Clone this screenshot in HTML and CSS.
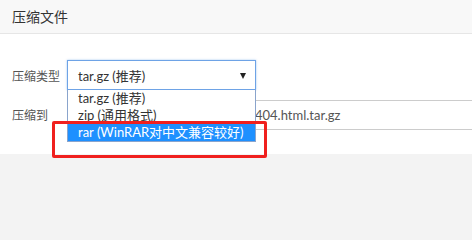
FILE: index.html
```html
<!DOCTYPE html>
<html>
<head>
<meta charset="utf-8">
<link rel="stylesheet" href="styles.css">
</head>
<body>
<div class="page">
  <div class="header">压缩文件</div>
  <div class="content">
    <div class="row">
      <label class="label">压缩类型</label>
      <div class="select">
        <span class="select-text">tar.gz (推荐)</span>
        <span class="arrow"></span>
      </div>
    </div>
    <div class="row row-second">
      <label class="label">压缩到</label>
      <div class="input"><span>404.html.tar.gz</span></div>
    </div>
    <ul class="dropdown">
      <li class="option">tar.gz (推荐)</li>
      <li class="option">zip (通用格式)</li>
      <li class="option selected">rar (WinRAR对中文兼容较好)</li>
    </ul>
    <div class="highlight-box"></div>
  </div>
  <div class="footer"></div>
</div>
</body>
</html>
```

FILE: styles.css
```css
html, body {
  margin: 0;
  padding: 0;
}
body {
  font-family: "Noto Sans CJK SC", "Noto Sans", sans-serif;
  background: #f3f3f3;
  overflow: hidden;
}
.page {
  width: 472px;
  height: 203px;
  display: flex;
  flex-direction: column;
  overflow: hidden;
}
.header {
  height: 33px;
  line-height: 32px;
  padding-left: 12px;
  font-size: 14px;
  color: #333;
  background: #f8f8f8;
  border-bottom: 1px solid #e6e6e6;
  flex: none;
}
.content {
  position: relative;
  background: #fff;
  padding: 26px 0 25px 0;
  display: flex;
  flex-direction: column;
  gap: 10px;
  flex: none;
}
.row {
  display: flex;
  align-items: center;
  height: 30px;
}
.label {
  width: 55px;
  padding-left: 12px;
  font-size: 12px;
  color: #555;
  flex: none;
}
.select {
  box-sizing: border-box;
  width: 189px;
  height: 30px;
  border: 1px solid #6ea3e6;
  box-shadow: 0 0 2px rgba(102, 160, 230, 0.6);
  display: flex;
  align-items: center;
  padding-left: 10px;
  padding-right: 6px;
  font-family: "Lato", "Noto Sans CJK SC", sans-serif;
  font-size: 13px;
  color: #333;
}
.select-text {
  flex: 1;
}
.arrow {
  width: 0;
  height: 0;
  border-left: 3.5px solid transparent;
  border-right: 3.5px solid transparent;
  border-top: 6px solid #222;
  margin-right: 3px;
  margin-top: 1px;
}
.row-second {
  height: 29px;
}
.input {
  box-sizing: border-box;
  width: 405px;
  height: 30px;
  border: 1px solid #ccc;
  border-right: none;
  display: flex;
  align-items: center;
  padding-left: 187px;
  font-family: "Lato", "Noto Sans CJK SC", sans-serif;
  font-size: 13px;
  color: #555;
  flex: none;
  white-space: nowrap;
}
.dropdown {
  position: absolute;
  left: 67px;
  top: 56px;
  width: 189px;
  box-sizing: border-box;
  margin: 0;
  padding: 0;
  list-style: none;
  background: #fff;
  border: 1px solid #8aa4cc;
  border-top: none;
  font-family: "Lato", "Noto Sans CJK SC", sans-serif;
  font-size: 13px;
  color: #333;
}
.option {
  height: 17px;
  line-height: 17px;
  padding-left: 10px;
  white-space: nowrap;
}
.option.selected {
  background: #1e90ff;
  color: #fff;
}
.highlight-box {
  position: absolute;
  left: 52px;
  top: 87px;
  width: 215px;
  height: 37px;
  box-sizing: border-box;
  border: 3px solid #f0201e;
  border-radius: 2px;
}
.footer {
  flex: 1;
  background: #f3f3f3;
}
```
